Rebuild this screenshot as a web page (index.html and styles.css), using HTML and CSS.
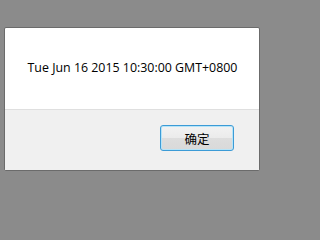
FILE: index.html
```html
<!DOCTYPE html>
<html>
<head>
<meta charset="utf-8">
<link rel="stylesheet" href="styles.css">
</head>
<body>
<div class="dialog">
  <div class="message">Tue Jun 16 2015 10:30:00 GMT+0800</div>
  <div class="footer">
    <button class="ok">确定</button>
  </div>
</div>
</body>
</html>
```

FILE: styles.css
```css
html, body {
  margin: 0;
  padding: 0;
}
body {
  width: 275px;
  height: 201px;
  background-color: #8b8b8b;
  background-image: radial-gradient(#858585 0.6px, transparent 0.7px);
  background-size: 2px 2px;
  padding-top: 27px;
  padding-left: 4px;
  box-sizing: border-box;
  font-family: "Open Sans", "Noto Sans", sans-serif;
}
.dialog {
  width: 256px;
  height: 144px;
  box-sizing: border-box;
  border: 1px solid #6b6b6b;
  border-radius: 2px;
  background: #ffffff;
  display: flex;
  flex-direction: column;
}
.message {
  height: 82px;
  box-sizing: border-box;
  padding-bottom: 2px;
  padding-left: 1px;
  display: flex;
  align-items: center;
  justify-content: center;
  font-size: 12.4px;
  color: #000;
  border-bottom: 1px solid #dfdfdf;
}
.footer {
  flex: 1;
  background: #f0f0f0;
  display: flex;
  justify-content: flex-end;
  align-items: flex-start;
  padding: 15px 25px 0 0;
}
.ok {
  width: 74px;
  height: 26px;
  box-sizing: border-box;
  border: 1px solid #3c9bd6;
  border-radius: 3px;
  box-shadow: inset 0 0 0 1px #b6e4f8;
  background: linear-gradient(#f2f2f2 0%, #ebebeb 50%, #dddddd 51%, #d9d9d9 100%);
  font-family: "Noto Sans CJK SC", sans-serif;
  font-size: 12.5px;
  color: #000;
  padding: 0;
  margin: 0;
}
```
